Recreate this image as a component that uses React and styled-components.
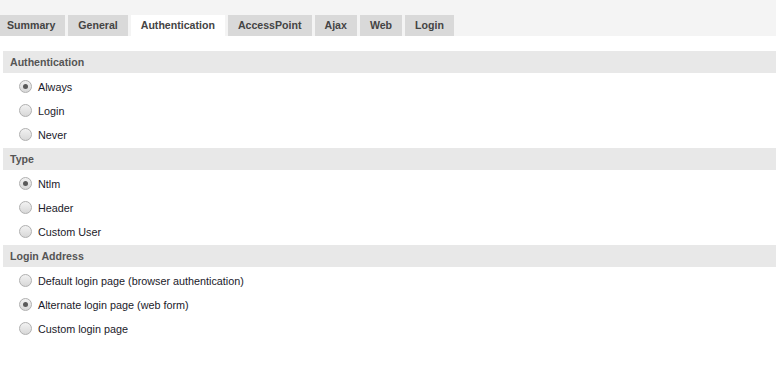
import React, { useState } from 'react';
import styled, { createGlobalStyle } from 'styled-components';

const GlobalStyle = createGlobalStyle`
    html, body {
        margin: 0;
        padding: 0;
        background: #ffffff;
    }
    body {
        font-family: "Liberation Sans", Arial, sans-serif;
    }
`;

const Page = styled.div`
    width: 776px;
    min-height: 382px;
    background: #ffffff;
`;

const TabBar = styled.div`
    display: flex;
    align-items: flex-end;
    height: 36px;
    background: #f4f4f4;
`;

const TabRow = styled.div`
    display: flex;
    gap: 3px;
    margin-left: -3px;
`;

const Tab = styled.button`
    height: 21px;
    padding: 0 10px;
    border: none;
    background: ${(p) => (p.$active ? '#ffffff' : '#d9d9d9')};
    color: #444444;
    font-family: "Liberation Sans", Arial, sans-serif;
    font-size: 10.6px;
    font-weight: bold;
    line-height: 21px;
    cursor: pointer;
`;

const Content = styled.div`
    padding: 15px 0 0 3px;
`;

const SectionHeader = styled.div`
    height: 22px;
    padding-left: 7px;
    background: #e8e8e8;
    color: #555555;
    font-size: 10.6px;
    font-weight: bold;
    line-height: 22px;
`;

const OptionList = styled.div`
    display: flex;
    flex-direction: column;
    padding: 2px 0 1px 16px;
`;

const Option = styled.label`
    display: flex;
    align-items: center;
    gap: 6px;
    height: 24px;
    color: #1a1a2a;
    font-size: 10.8px;
    cursor: pointer;
`;

const Radio = styled.input`
    appearance: none;
    width: 13px;
    height: 13px;
    margin: 0 0 2px 0;
    border-radius: 50%;
    border: 1px solid #b0b0b0;
    background: linear-gradient(180deg, #f2f2f2 0%, #d8d8d8 100%);
    box-sizing: border-box;
    display: grid;
    place-items: center;

    &:checked::after {
        content: '';
        width: 5px;
        height: 5px;
        border-radius: 50%;
        background: #5a5a5a;
    }
`;

const tabs = ['Summary', 'General', 'Authentication', 'AccessPoint', 'Ajax', 'Web', 'Login'];

const sections = [
    { title: 'Authentication', name: 'auth', options: ['Always', 'Login', 'Never'], initial: 0 },
    { title: 'Type', name: 'type', options: ['Ntlm', 'Header', 'Custom User'], initial: 0 },
    {
        title: 'Login Address',
        name: 'address',
        options: [
            'Default login page (browser authentication)',
            'Alternate login page (web form)',
            'Custom login page'
        ],
        initial: 1
    }
];

const Section = ({ title, name, options, initial }) => {
    const [selected, setSelected] = useState(initial);

    return (
        <div>
            <SectionHeader>{title}</SectionHeader>
            <OptionList>
                {options.map((label, i) => (
                    <Option key={label}>
                        <Radio
                            type="radio"
                            name={name}
                            checked={selected === i}
                            onChange={() => setSelected(i)}
                        />
                        {label}
                    </Option>
                ))}
            </OptionList>
        </div>
    );
};

const App = () => {
    const [activeTab, setActiveTab] = useState('Authentication');

    return (
        <Page>
            <GlobalStyle />
            <TabBar>
                <TabRow>
                    {tabs.map((t) => (
                        <Tab key={t} $active={t === activeTab} onClick={() => setActiveTab(t)}>
                            {t}
                        </Tab>
                    ))}
                </TabRow>
            </TabBar>
            <Content>
                {sections.map((s) => (
                    <Section key={s.name} {...s} />
                ))}
            </Content>
        </Page>
    );
};

export default App;
